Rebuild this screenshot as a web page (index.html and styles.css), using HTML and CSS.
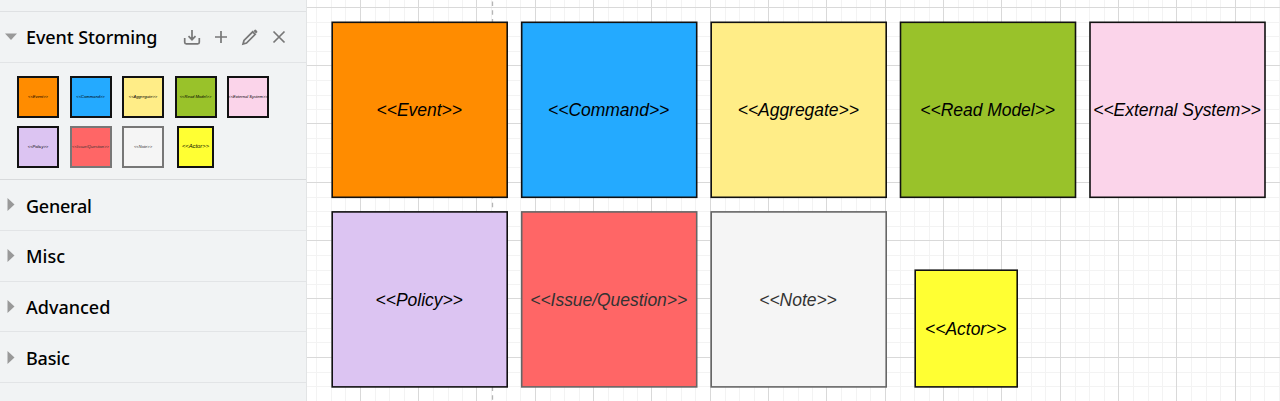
FILE: index.html
```
<!DOCTYPE html>
<html lang="en">
<head>
<meta charset="utf-8">
<title>Event Storming</title>
<link rel="stylesheet" href="styles.css">
</head>
<body>
<div class="app">
  <aside class="sidebar">
    <div class="strip"></div>
    <header class="section section-open">
      <svg class="arrow" width="12" height="8" viewBox="0 0 12 8"><path d="M0 .5h12L6 7z"/></svg>
      <h2 class="title title-main">Event Storming</h2>
      <div class="tools">
        <svg width="18" height="18" viewBox="0 0 18 18"><path d="M9 2v9.500M5.500 8.200L9 11.700l3.500-3.500M1.700 10v4.300q0 1.500 1.500 1.500h11.600q1.500 0 1.500-1.500V10"/></svg>
        <svg width="18" height="18" viewBox="0 0 18 18"><path d="M9 3v12M3 9h12"/></svg>
        <svg width="18" height="18" viewBox="0 0 18 18"><path d="M2 16l1-3.500 8.700-8.700 2.500 2.500L5.500 15z"/><path class="solid" d="M12.500 3l1-1q.8-.8 1.600 0l.9.900q.8.800 0 1.600l-1 1z"/></svg>
        <svg width="18" height="18" viewBox="0 0 18 18"><path d="M3.500 3.500l11 11M14.500 3.500l-11 11"/></svg>
      </div>
    </header>
    <div class="palette">
      <div class="thumb event">&lt;&lt;Event&gt;&gt;</div>
      <div class="thumb command">&lt;&lt;Command&gt;&gt;</div>
      <div class="thumb aggregate">&lt;&lt;Aggregate&gt;&gt;</div>
      <div class="thumb model">&lt;&lt;Read Model&gt;&gt;</div>
      <div class="thumb external">&lt;&lt;External System&gt;&gt;</div>
      <div class="thumb policy">&lt;&lt;Policy&gt;&gt;</div>
      <div class="thumb issue">&lt;&lt;Issue/Question&gt;&gt;</div>
      <div class="thumb note">&lt;&lt;Note&gt;&gt;</div>
      <div class="thumb actor">&lt;&lt;Actor&gt;&gt;</div>
    </div>
    <div class="section section-closed"><svg class="arrow" width="12" height="13" viewBox="0 0 12 13"><path d="M2.500 0L9.500 6.500l-7 6.500z"/></svg><h2 class="title general">General</h2></div>
    <div class="section section-closed"><svg class="arrow" width="12" height="13" viewBox="0 0 12 13"><path d="M2.500 0L9.500 6.500l-7 6.500z"/></svg><h2 class="title">Misc</h2></div>
    <div class="section section-closed"><svg class="arrow" width="12" height="13" viewBox="0 0 12 13"><path d="M2.500 0L9.500 6.500l-7 6.500z"/></svg><h2 class="title">Advanced</h2></div>
    <div class="section section-closed"><svg class="arrow" width="12" height="13" viewBox="0 0 12 13"><path d="M2.500 0L9.500 6.500l-7 6.500z"/></svg><h2 class="title basic">Basic</h2></div>
  </aside>
  <main class="canvas">
    <svg width="973" height="401" viewBox="307 0 973 401">
      <defs>
        <pattern id="grid" x="360" y="7" width="175" height="175" patternUnits="userSpaceOnUse">
          <path class="minor" d="M15.500 0v175M29.500 0v175M44.500 0v175M73.500 0v175M88.500 0v175M102.500 0v175M131.500 0v175M146.500 0v175M160.500 0v175M0 15.500h175M0 29.500h175M0 44.500h175M0 73.500h175M0 88.500h175M0 102.500h175M0 131.500h175M0 146.500h175M0 160.500h175"/>
          <path class="major" d="M.5 0v175M58.500 0v175M116.500 0v175M0 .5h175M0 58.500h175M0 116.500h175"/>
        </pattern>
      </defs>
      <rect x="307" width="973" height="401" fill="url(#grid)"/>
      <path class="page-break" d="M492.500 1.500V401"/>
      <g class="shape event"><rect x="332.200" y="22.300" width="175" height="175"/><text x="419.200" y="115.800">&lt;&lt;Event&gt;&gt;</text></g>
      <g class="shape command"><rect x="521.700" y="22.300" width="175" height="175"/><text x="608.700" y="115.800">&lt;&lt;Command&gt;&gt;</text></g>
      <g class="shape aggregate"><rect x="711.200" y="22.300" width="175" height="175"/><text x="798.300" y="115.800">&lt;&lt;Aggregate&gt;&gt;</text></g>
      <g class="shape model"><rect x="900.500" y="22.300" width="175" height="175"/><text x="987.700" y="115.800">&lt;&lt;Read Model&gt;&gt;</text></g>
      <g class="shape external"><rect x="1090" y="22.300" width="175" height="175"/><text x="1177" y="115.800">&lt;&lt;External System&gt;&gt;</text></g>
      <g class="shape policy"><rect x="332.200" y="211.900" width="175" height="175"/><text x="419.200" y="305.800">&lt;&lt;Policy&gt;&gt;</text></g>
      <g class="shape issue"><rect x="521.700" y="211.900" width="175" height="175"/><text x="608.700" y="305.800">&lt;&lt;Issue/Question&gt;&gt;</text></g>
      <g class="shape note"><rect x="711.200" y="211.900" width="175" height="175"/><text x="798" y="305.800">&lt;&lt;Note&gt;&gt;</text></g>
      <g class="shape actor"><rect x="915.200" y="270.200" width="102" height="116.700"/><text x="965.800" y="334.800">&lt;&lt;Actor&gt;&gt;</text></g>
    </svg>
  </main>
</div>
</body>
</html>
```
FILE: styles.css
```
* { box-sizing: border-box; }
body { margin: 0; overflow: hidden; background: #fff; }
.app { display: flex; height: 401px; }
.sidebar {
  flex: 0 0 307px;
  border-right: 1px solid #e2e4e5;
  background: #f1f3f4;
}
.strip { height: 12px; border-bottom: 1px solid #dfe1e3; }
.section {
  display: flex;
  align-items: center;
  height: 51px;
  padding-left: 5px;
  border-bottom: 1px solid #e2e4e6;
}
.section-closed { height: 50.8px; }
.section-closed .title { padding-top: 1.4px; }
.arrow { flex: none; margin-bottom: 1px; fill: #999; }
.section-closed .arrow { margin-bottom: 0; }
.title {
  margin: 0 0 0 9px;
  font: 500 18px/26px "Noto Sans", sans-serif;
  color: #000;
  white-space: nowrap;
}
.title-main { width: 131px; letter-spacing: -0.08px; }
.general { letter-spacing: -0.25px; }
.basic { letter-spacing: -0.2px; }
.tools { display: flex; gap: 11px; margin-left: 26px; }
.tools svg { fill: none; stroke: #777; stroke-width: 1.7; }
.tools .solid { fill: #777; stroke: none; }
.palette {
  display: grid;
  grid-template-columns: repeat(5, 42px);
  grid-auto-rows: 42px;
  gap: 8px 10.5px;
  height: 117px;
  padding: 13px 0 0 17px;
  border-bottom: 1px solid #d8dadc;
}
.thumb {
  display: flex;
  align-items: center;
  justify-content: center;
  border: 2px solid #111;
  font: italic 4.1px/1 "Liberation Sans", Arial, sans-serif;
  color: #000;
  white-space: nowrap;
}
.thumb.actor { width: 37px; justify-self: center; font-size: 5.8px; }
.shape rect { stroke: #111; stroke-width: 1.6; }
.shape text {
  font: italic 17.5px "Liberation Sans", Arial, sans-serif;
  letter-spacing: -0.04px;
  text-anchor: middle;
  fill: #000;
}
.canvas svg { display: block; }
.minor { stroke: #f3f3f3; }
.major { stroke: #d9d9d9; }
.page-break { stroke: #b5b5b5; stroke-width: 1.3; stroke-dasharray: 4.4 4.35; }
.event { background: #ff8c00; fill: #ff8c00; }
.command { background: #24aaff; fill: #24aaff; }
.aggregate { background: #ffed87; fill: #ffed87; }
.model { background: #99c22a; fill: #99c22a; }
.external { background: #fbd4ea; fill: #fbd4ea; }
.policy { background: #dcc4f2; fill: #dcc4f2; }
.issue { background: #ff6666; fill: #ff6666; }
.note { background: #f5f5f5; fill: #f5f5f5; }
.actor { background: #ffff33; fill: #ffff33; }
.thumb.issue, .thumb.note { border-color: #777; color: #333; }
.shape.issue rect, .shape.note rect { stroke: #666; }
.shape.issue text, .shape.note text { fill: #333; }
```
